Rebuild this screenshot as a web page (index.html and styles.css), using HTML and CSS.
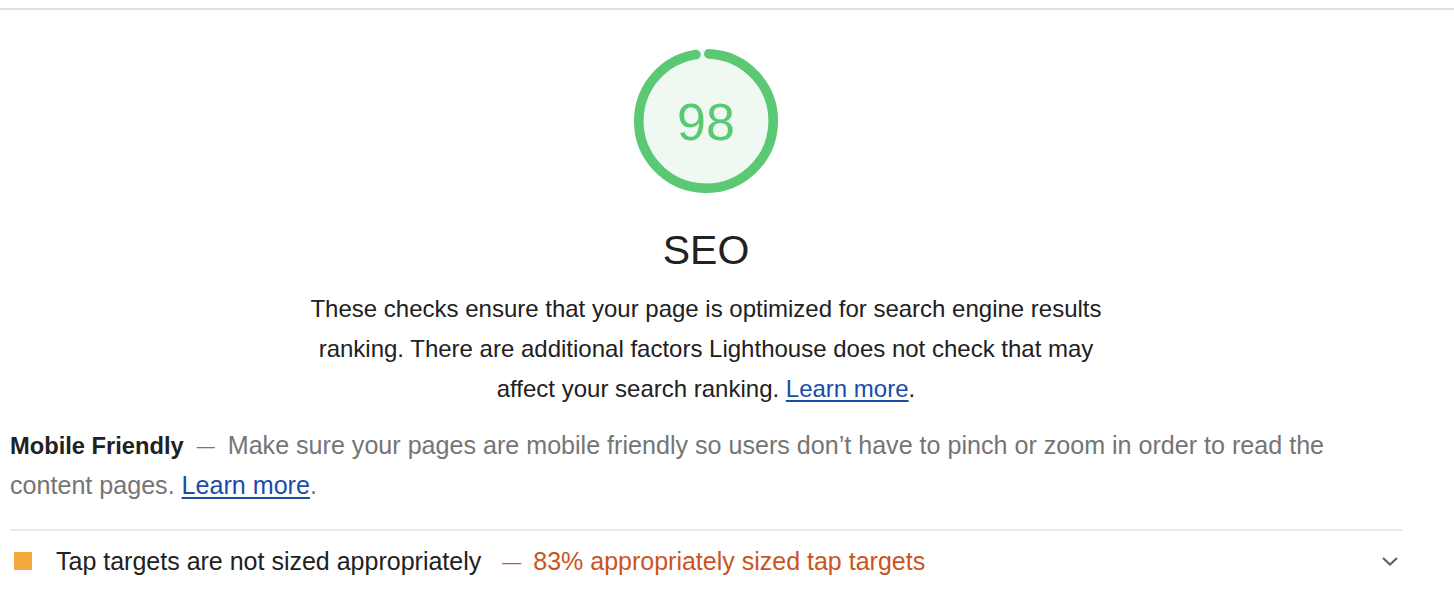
FILE: index.html
```html
<!DOCTYPE html>
<html lang="en">
<head>
<meta charset="utf-8">
<title>SEO</title>
<link rel="stylesheet" href="styles.css">
</head>
<body>
<div class="topline"></div>
<section class="category">
  <div class="header">
    <div class="gauge">
      <svg class="gauge-svg" width="144" height="144" viewBox="0 0 144 144">
        <circle class="gauge-base" cx="72" cy="72" r="67.2"/>
        <circle class="gauge-arc" cx="72" cy="72" r="67.2" stroke-dasharray="408.6 422.2" transform="rotate(-87.6 72 72)"/>
      </svg>
      <div class="gauge-value">98</div>
    </div>
    <h1 class="title">SEO</h1>
    <p class="description">These checks ensure that your page is optimized for search engine results ranking. There are additional factors Lighthouse does not check that may affect your search ranking. <a href="#">Learn more</a>.</p>
  </div>
  <div class="group">
    <p class="group-desc"><span class="group-title">Mobile Friendly</span><span class="dash">—</span>Make sure your pages are mobile friendly so users don’t have to pinch or zoom in order to read the content pages. <a href="#">Learn more</a>.</p>
    <div class="audit">
      <span class="audit-icon"></span>
      <span class="audit-title">Tap targets are not sized appropriately</span>
      <span class="audit-display"><span class="audit-dash">—</span>83% appropriately sized tap targets</span>
      <svg class="chevron" width="18" height="12" viewBox="0 0 18 12"><path d="M2 3 L9 9.5 L16 3" fill="none" stroke="#616161" stroke-width="2.2"/></svg>
    </div>
  </div>
</section>
</body>
</html>
```

FILE: styles.css
```css
html, body {
  margin: 0;
  padding: 0;
  background: #ffffff;
}
body {
  font-family: "Liberation Sans", Arial, Helvetica, sans-serif;
  color: #212121;
}
.topline {
  margin-top: 8px;
  height: 2px;
  background: #e0e0e0;
}
.category {
  padding: 0 52px 0 10px;
}
.header {
  display: flex;
  flex-direction: column;
  align-items: center;
  padding-top: 39px;
}
.gauge {
  position: relative;
  width: 144px;
  height: 144px;
}
.gauge-svg {
  display: block;
}
.gauge-base {
  fill: #eff9f2;
  stroke: #eff9f2;
  stroke-width: 9.6;
}
.gauge-arc {
  fill: none;
  stroke: #5bc874;
  stroke-width: 9.6;
  stroke-linecap: round;
}
.gauge-value {
  position: absolute;
  inset: 0;
  display: flex;
  align-items: center;
  justify-content: center;
  font-size: 52px;
  color: #5bc874;
  padding-top: 1px;
}
.title {
  margin: 32px 0 0 0;
  font-size: 41px;
  line-height: 50px;
  font-weight: 400;
  color: #212121;
}
.description {
  margin: 14px 0 0 0;
  max-width: 820px;
  text-align: center;
  font-size: 24px;
  line-height: 40px;
}
a {
  color: #1a4ca8;
  text-decoration: underline;
  text-underline-offset: 3px;
}
.group {
  margin-top: 16px;
}
.group-desc {
  margin: 0;
  font-size: 25.1px;
  line-height: 40px;
  color: #757575;
  padding-right: 20px;
}
.group-title {
  font-size: 23.7px;
  line-height: 1;
  font-weight: 700;
  color: #212121;
}
.dash {
  font-size: 18px;
  line-height: 1;
  margin: 0 13px 0 13px;
  color: #757575;
  vertical-align: 2px;
}
.audit {
  margin-top: 24px;
  border-top: 2px solid #ebebeb;
  display: flex;
  align-items: center;
  height: 60px;
  font-size: 25px;
}
.audit-icon {
  width: 18px;
  height: 18px;
  background: #f4a73c;
  margin: 0 24px 0 4px;
  flex: none;
}
.audit-title {
  color: #212121;
}
.audit-display {
  color: #cc5420;
}
.audit-dash {
  font-size: 19px;
  margin: 0 12px 0 21px;
  vertical-align: 2px;
}
.chevron {
  margin-left: auto;
  margin-right: 3px;
}
```
